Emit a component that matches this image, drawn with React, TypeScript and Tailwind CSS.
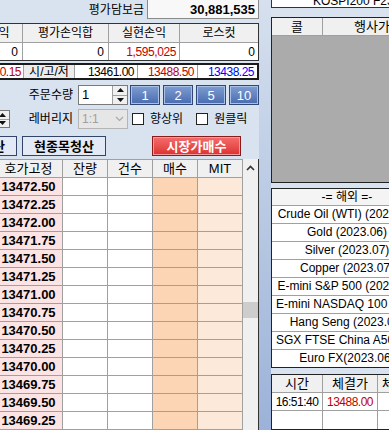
import React from "react";

const PRICES = Array.from({ length: 14 }, (_, i) => (13472.5 - i * 0.25).toFixed(2));

const OVERSEAS = [
  "Crude Oil (WTI) (2023.07)",
  "Gold (2023.06)",
  "Silver (2023.07)",
  "Copper (2023.07)",
  "E-mini S&P 500 (2023.06)",
  "E-mini NASDAQ 100 (2023.06)",
  "Hang Seng (2023.06)",
  "SGX FTSE China A50 (2023.06)",
  "Euro FX(2023.06)",
];

function SpinArrows() {
  return (
    <div className="flex h-full w-[15px] flex-col border-l border-[#a0a0a0]">
      <div className="flex flex-1 items-center justify-center border-b border-[#a0a0a0] bg-[#f0f0f0]">
        <svg width="7" height="4" viewBox="0 0 7 4">
          <path d="M0 4 L3.5 0 L7 4Z" fill="#111" />
        </svg>
      </div>
      <div className="flex flex-1 items-center justify-center bg-[#f0f0f0]">
        <svg width="7" height="4" viewBox="0 0 7 4">
          <path d="M0 0 L3.5 4 L7 0Z" fill="#111" />
        </svg>
      </div>
    </div>
  );
}

function Checkbox({ label, className = "" }: { label: string; className?: string }) {
  return (
    <div className={`flex items-center ${className}`}>
      <span className="h-[12px] w-[12px] border border-[#222] bg-white" />
      <span className="ml-[6px] text-[12px] leading-none">{label}</span>
    </div>
  );
}

export default function App() {
  const cell = "flex items-center border-r border-[#a0a0a0]";
  return (
    <div className="flex h-[430px] w-[389px] overflow-hidden bg-[#d9e3f0] font-['Liberation_Sans','Noto_Sans_CJK_KR',sans-serif] text-black">
      {/* left: order panel */}
      <div className="flex w-[259px] shrink-0 flex-col items-start">
        <div className="flex h-[20px] items-center">
          <span className="w-[144px] text-right text-[12px] leading-none">평가담보금</span>
          <div className="-mt-px ml-[3px] flex h-[20px] w-[112px] items-center justify-end border border-[#8a8a8a] bg-[#f8f8f8] pr-[3px] text-[13px] font-bold leading-none">
            30,881,535
          </div>
        </div>

        <div className="ml-[-48px] mt-[4px] w-[307px] border border-[#333] bg-white">
          <div className="grid h-[19px] grid-cols-[70px_86px_71px_78px] border-b border-[#a0a0a0] bg-[#f0f0f0] text-[12px] leading-none">
            {["매매손익", "평가손익합", "실현손익", "로스컷"].map((h, i) => (
              <div key={h} className={`flex items-center justify-center ${i < 3 ? "border-r border-[#a0a0a0]" : ""}`}>
                {h}
              </div>
            ))}
          </div>
          <div className="grid h-[17px] grid-cols-[70px_86px_71px_78px] text-[12px] leading-none">
            <div className={`${cell} justify-end pr-[4px]`}>0</div>
            <div className={`${cell} justify-end pr-[4px]`}>0</div>
            <div className={`${cell} justify-end pr-[3px] tracking-[-0.4px] text-[#c00000]`}>1,595,025</div>
            <div className="flex items-center justify-end pr-[3px]">0</div>
          </div>
        </div>

        <div className="ml-[-40px] mt-[2px] grid h-[20px] w-[299px] grid-cols-[62px_51px_63px_60px_59px] border-2 border-[#1a1a1a] bg-white text-[12px] leading-none tracking-[-0.5px]">
          <div className={`${cell} justify-end pr-[2px] text-[#c00000]`}>0.15</div>
          <div className={`${cell} justify-center bg-[#ececec] tracking-normal`}>시/고/저</div>
          <div className={`${cell} justify-end pr-[3px]`}>13461.00</div>
          <div className={`${cell} justify-end pr-[3px] text-[#c00000]`}>13488.50</div>
          <div className="flex items-center justify-end pr-[3px] text-[#0000ff]">13438.25</div>
        </div>

        <div className="mt-[5px] flex h-[20px] items-center">
          <span className="w-[73px] text-right text-[12px] leading-none">주문수량</span>
          <div className="ml-[5px] flex h-[20px] w-[50px] border border-[#7a7a7a] bg-white">
            <span className="flex-1 pl-[3px] text-[13px] leading-[18px]">1</span>
            <SpinArrows />
          </div>
          <div className="ml-[2px] flex gap-[3px]">
            {["1", "2", "5", "10"].map((n) => (
              <div
                key={n}
                className="flex h-[20px] w-[30px] items-center justify-center border border-[#2f4878] bg-gradient-to-b from-[#7f9dd2] to-[#4a6caf] text-[13px] leading-none text-white shadow-[inset_0_0_0_1px_#a9c0e6]"
              >
                {n}
              </div>
            ))}
          </div>
        </div>

        <div className="mt-[4px] flex h-[20px] items-center">
          <div className="ml-[-6px] flex h-[18px] w-[16px] border border-[#7a7a7a] bg-white">
            <SpinArrows />
          </div>
          <span className="w-[63px] text-right text-[12px] leading-none">레버리지</span>
          <div className="ml-[5px] flex h-[20px] w-[50px] items-center justify-between border border-[#b5b5b5] bg-[#e6e6e6] px-[3px] text-[12px] leading-none text-[#a0a0a0]">
            <span>1:1</span>
            <svg width="9" height="6" viewBox="0 0 9 6">
              <path d="M1 1 L4.5 4.5 L8 1" stroke="#a8a8a8" strokeWidth="1.2" fill="none" />
            </svg>
          </div>
          <Checkbox label="향상위" className="ml-[4px]" />
          <Checkbox label="원클릭" className="ml-[13px]" />
        </div>

        <div className="mt-[7px] flex h-[20px] items-center">
          <div className="ml-[-67px] flex h-[20px] w-[84px] items-center justify-center border border-[#33446b] bg-[#e3eaf5] text-[13px] font-bold leading-none">
            전종목청산
          </div>
          <div className="ml-[5px] flex h-[20px] w-[84px] items-center justify-center border border-[#33446b] bg-[#e3eaf5] text-[13px] font-bold leading-none">
            현종목청산
          </div>
          <div className="ml-[46px] flex h-[20px] w-[89px] items-center justify-center border border-[#8b1a1a] bg-gradient-to-b from-[#f46c6c] to-[#dc2f30] text-[13px] font-bold leading-none text-white shadow-[inset_0_0_0_1px_#f79a9a]">
            시장가매수
          </div>
        </div>

        <div className="ml-[-5px] mt-[3px] flex w-[264px] border-r border-[#333]">
          <div className="w-[248px] border-t border-[#a0a0a0] bg-white">
            <div className="grid h-[18px] grid-cols-[68px_45px_45px_45px_45px] border-b border-[#a0a0a0] bg-[#f0f0f0] text-[13px] leading-none">
              {["호가고정", "잔량", "건수", "매수", "MIT"].map((h) => (
                <div key={h} className={`${cell} justify-center`}>
                  {h}
                </div>
              ))}
            </div>
            {PRICES.map((p) => (
              <div key={p} className="grid h-[18px] grid-cols-[68px_45px_45px_45px_45px] border-b border-[#a0a0a0]">
                <div className={`${cell} justify-center bg-[#fde4e4] text-[13px] font-bold leading-none`}>{p}</div>
                <div className={cell} />
                <div className={cell} />
                <div className={`${cell} bg-[#fcd5b4]`} />
                <div className={`${cell} bg-[#fde9d9]`} />
              </div>
            ))}
          </div>
          <div className="flex w-[15px] flex-col bg-[#f0f0f0]">
            <div className="flex h-[18px] items-center justify-center">
              <svg width="9" height="6" viewBox="0 0 9 6">
                <path d="M1 5 L4.5 1.5 L8 5" stroke="#333" strokeWidth="1.6" fill="none" />
              </svg>
            </div>
            <div className="h-[125px]" />
            <div className="h-[16px] bg-[#cdcdcd]" />
          </div>
        </div>
      </div>

      <div className="w-[12px] shrink-0 bg-gradient-to-b from-[#d6e0ee] to-[#9cb2d8]" />

      {/* right: market panel */}
      <div className="flex w-[152px] shrink-0 flex-col">
        <div className="mt-[-11px] flex h-[20px] items-center whitespace-nowrap border border-[#333] bg-white pl-[41px] pt-[5px] text-[12px] leading-none">
          KOSPI200 F2306
        </div>

        <div className="mt-[9px] flex h-[181px] flex-col border border-[#222] bg-[#ababab]">
          <div className="grid h-[18px] grid-cols-[51px_1fr] border-b border-[#a0a0a0] bg-[#f0f0f0] text-[13px] leading-none">
            <div className={`${cell} justify-center`}>콜</div>
            <div className={`${cell} justify-center`}>행사가</div>
          </div>
        </div>

        <div className="mt-[5px] border border-[#222] bg-white text-[12px]">
          <div className="h-[16px] bg-[#f4f4f4] text-center leading-[16px]">-= 해외 =-</div>
          {OVERSEAS.map((o) => (
            <div key={o} className="h-[18px] overflow-hidden whitespace-nowrap border-t border-[#a0a0a0] px-[4px] text-center leading-[17px]">
              {o}
            </div>
          ))}
        </div>

        <div className="mt-[6px] border border-[#222] bg-white">
          <div className="grid h-[18px] grid-cols-[51px_55px_1fr] border-b border-[#a0a0a0] bg-[#f0f0f0] text-[13px] leading-none">
            <div className={`${cell} justify-center`}>시간</div>
            <div className={`${cell} justify-center`}>체결가</div>
            <div className="flex items-center justify-center">체결량</div>
          </div>
          <div className="grid h-[18px] grid-cols-[51px_55px_1fr] border-b border-[#a0a0a0] text-[12px] leading-none tracking-[-0.5px]">
            <div className={`${cell} justify-center`}>16:51:40</div>
            <div className={`${cell} justify-center text-[#c00000]`}>13488.00</div>
            <div className="flex items-center justify-center">1</div>
          </div>
          <div className="grid h-[18px] grid-cols-[51px_55px_1fr]">
            <div className={cell} />
            <div className={cell} />
            <div />
          </div>
        </div>
      </div>
    </div>
  );
}
